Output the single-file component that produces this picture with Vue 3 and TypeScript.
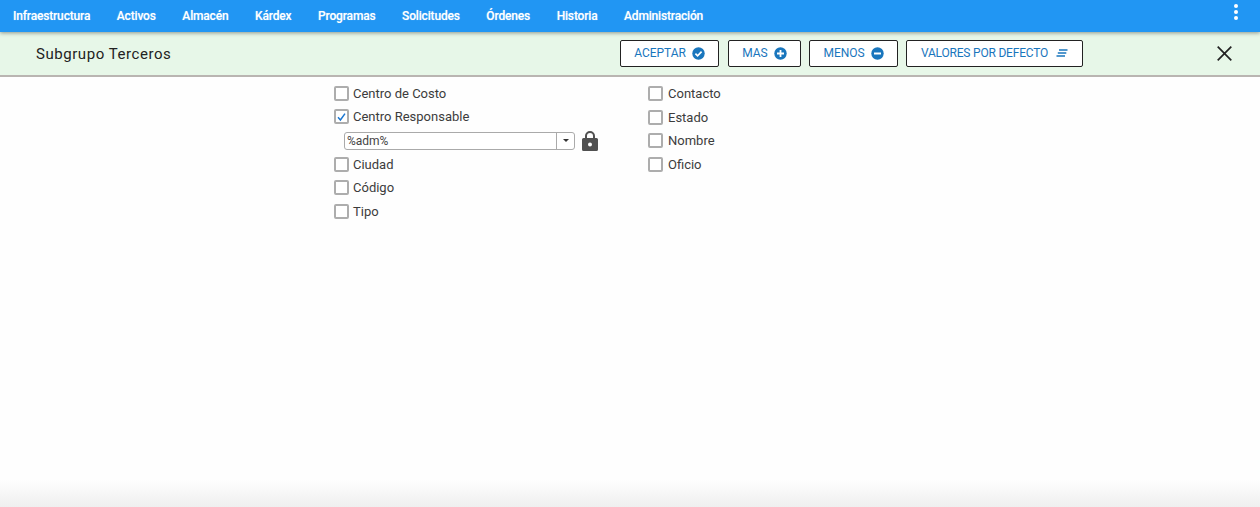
<script setup lang="ts">
const menu: string[] = ['Infraestructura', 'Activos', 'Almacén', 'Kárdex', 'Programas', 'Solicitudes', 'Órdenes', 'Historia', 'Administración']
const left: string[] = ['Centro de Costo', 'Centro Responsable', 'Ciudad', 'Código', 'Tipo']
const right: string[] = ['Contacto', 'Estado', 'Nombre', 'Oficio']
</script>

<template>
  <div class="page">
    <header class="nav">
      <nav class="menu">
        <span v-for="m in menu" :key="m" class="menu-item">{{ m }}</span>
      </nav>
      <span class="dots"><i></i><i></i><i></i></span>
    </header>
    <section class="bar">
      <h1 class="title">Subgrupo Terceros</h1>
      <div class="actions">
        <button class="btn b1">ACEPTAR
          <svg width="13" height="13" viewBox="0 0 13 13"><circle cx="6.5" cy="6.5" r="6.2" fill="#1976bd"/><path d="M3.4 6.7l2.2 2.2 4-4.2" fill="none" stroke="#fff" stroke-width="1.7"/></svg>
        </button>
        <button class="btn b2">MAS
          <svg width="13" height="13" viewBox="0 0 13 13"><circle cx="6.5" cy="6.5" r="6.2" fill="#1976bd"/><path d="M3 6.5h7M6.5 3v7" stroke="#fff" stroke-width="1.8"/></svg>
        </button>
        <button class="btn b3">MENOS
          <svg width="13" height="13" viewBox="0 0 13 13"><circle cx="6.5" cy="6.5" r="6.2" fill="#1976bd"/><path d="M3 6.5h7" stroke="#fff" stroke-width="2"/></svg>
        </button>
        <button class="btn b4"><span class="tight">VALORES POR DEFECTO</span>
          <svg class="lines" width="12" height="8" viewBox="0 0 12 8"><path d="M3 1h8.5M1.8 4h8.5M.5 7h8.5" stroke="#1976bd" stroke-width="1.3" fill="none"/></svg>
        </button>
      </div>
      <svg class="close" width="15" height="15" viewBox="0 0 15 15"><path d="M.7.7l13.600 13.600M14.300.7L.7 14.300" stroke="#222" stroke-width="1.7" fill="none"/></svg>
    </section>
    <main class="content">
      <div class="col col-left">
        <template v-for="l in left" :key="l">
          <label class="row">
            <span class="box" :class="{ on: l === 'Centro Responsable' }">
              <svg v-if="l === 'Centro Responsable'" width="12" height="12" viewBox="0 0 12 12"><path d="M2.2 6.3l2.6 3 5-7" fill="none" stroke="#1976d2" stroke-width="1.6"/></svg>
            </span>
            {{ l }}
          </label>
          <div v-if="l === 'Centro Responsable'" class="filter">
            <div class="combo">
              <span class="value">%adm%</span>
              <span class="arrow"><i></i></span>
            </div>
            <svg class="lock" width="16" height="20" viewBox="0 0 16 20"><path fill-rule="evenodd" fill="#505050" d="M3 7V5a5 5 0 0 1 10 0v2h1.500A1.500 1.500 0 0 1 16 8.500v10a1.500 1.500 0 0 1-1.500 1.500h-13A1.500 1.500 0 0 1 0 18.500v-10A1.500 1.500 0 0 1 1.500 7zM5 7h6V5a3 3 0 0 0-6 0zM8 11.500a2 2 0 1 0 0 4 2 2 0 0 0 0-4z"/></svg>
          </div>
        </template>
      </div>
      <div class="col col-right">
        <label v-for="r in right" :key="r" class="row">
          <span class="box"></span>{{ r }}
        </label>
      </div>
    </main>
    <div class="bottom"></div>
  </div>
</template>

<style>
html, body { margin: 0; background: #fff; overflow: hidden; }
</style>

<style scoped>
.page { height: 507px; display: flex; flex-direction: column; font-family: Roboto, "Liberation Sans", sans-serif; position: relative; background: #fefefe; overflow: hidden; }
.nav { height: 32px; flex: none; background: #2196f3; box-shadow: 0 1px 4px rgba(0,0,0,.4); position: relative; z-index: 2; display: flex; align-items: center; justify-content: space-between; }
.menu { display: flex; gap: 26.6px; padding-left: 13px; margin-top: -1px; }
.menu-item { color: #fff; font-size: 12px; font-weight: 500; letter-spacing: -.17px; text-shadow: 0 0 1px rgba(255,255,255,.5); }
.dots { display: flex; flex-direction: column; gap: 2px; margin-right: 22px; margin-top: -8px; }
.dots i { width: 4px; height: 4px; border-radius: 50%; background: #fff; display: block; }
.bar { height: 45px; flex: none; box-sizing: border-box; background: #e7f7e8; border-bottom: 2px solid #b9b5b1; display: flex; align-items: center; position: relative; }
.title { margin: 0 0 0 36px; width: 584px; font-size: 15px; font-weight: 400; color: #222; letter-spacing: .55px; white-space: nowrap; }
.actions { display: flex; gap: 8px; }
.btn { height: 27px; box-sizing: border-box; border: 1px solid #222; border-radius: 2px; background: #fff; color: #1976bd; font: 400 12px Roboto, "Liberation Sans", sans-serif; letter-spacing: -.05px; display: flex; align-items: center; justify-content: center; gap: 6px; padding: 0 0 1px; }
.b1 { width: 99px; margin-right: 1px; }
.b2 { width: 73px; }
.b3 { width: 89px; }
.b4 { width: 177px; gap: 8px; }
.tight { letter-spacing: -.2px; }
.close { position: absolute; left: 1217px; top: 14px; }
.content { display: flex; padding: 4.4px 0 0 334px; }
.col { display: flex; flex-direction: column; }
.col-left { width: 314px; }
.row { height: 23.6px; display: flex; align-items: center; gap: 4px; font-size: 13px; color: #3c3c3c; letter-spacing: 0; }
.col-right .row { gap: 5px; height: 23.8px; }
.box { width: 15px; height: 15px; box-sizing: border-box; border: 2px solid #adadad; border-radius: 2px; background: #fff; display: flex; align-items: center; justify-content: center; }
.filter { display: flex; align-items: center; height: 24px; margin-left: 10px; gap: 7px; }
.combo { width: 231px; height: 18px; box-sizing: border-box; border: 1px solid #aaa; border-radius: 3px; background: #fff; display: flex; align-items: stretch; }
.value { flex: 1; font-size: 12px; line-height: 16px; padding-left: 2px; color: #444; }
.arrow { width: 17px; border-left: 1px solid #aaa; display: flex; align-items: center; justify-content: center; }
.arrow i { width: 0; height: 0; border: 3.500px solid transparent; border-top: 3px solid #333; border-bottom: 0; }
.bottom { position: absolute; left: 0; right: 0; bottom: 0; height: 27px; background: linear-gradient(to bottom, rgba(240,240,240,0), #efefef); }
</style>
